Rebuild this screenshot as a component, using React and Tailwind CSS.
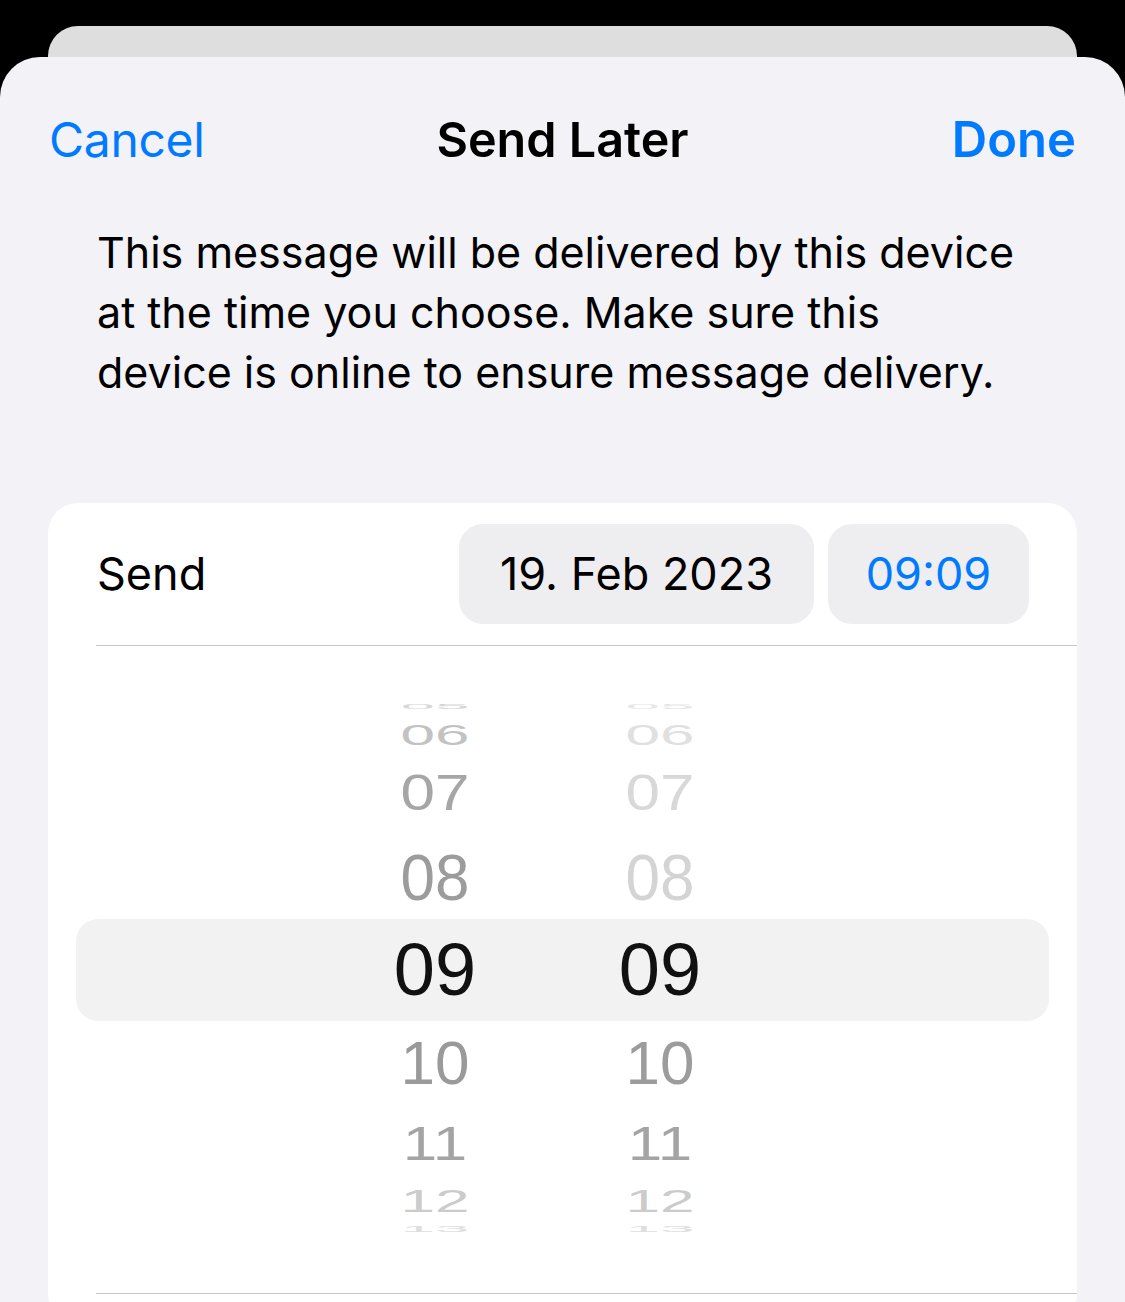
import React from 'react'

const ui = { fontFamily: 'Inter, "Liberation Sans", sans-serif' }
const digits = { fontFamily: '"Liberation Sans", Arial, sans-serif' }

// rows above the selection band
const topRows = [
    { v: '05', h: 'h-[30px]', size: 'text-[62px]', sy: 'scale-y-[0.12]', hc: 'text-[#d6d6d6]', mc: 'text-[#e6e6e6]' },
    { v: '06', h: 'h-[28px]', size: 'text-[62px]', sy: 'scale-y-[0.48]', hc: 'text-[#c2c2c2]', mc: 'text-[#e0e0e0]' },
    { v: '07', h: 'h-[88px]', size: 'text-[62px]', sy: 'scale-y-[0.8]', hc: 'text-[#a6a6a6]', mc: 'text-[#d8d8d8]' },
    { v: '08', h: 'h-[82px]', size: 'text-[62px]', sy: 'scale-y-[1.03]', hc: 'text-[#9c9c9c]', mc: 'text-[#d4d4d4]' },
]

// rows below the selection band
const bottomRows = [
    { v: '10', h: 'h-[84px]', size: 'text-[62px]', sy: 'scale-y-[1]', hc: 'text-[#9a9a9a]', mc: 'text-[#9c9c9c]' },
    { v: '11', h: 'h-[78px]', size: 'text-[62px]', sy: 'scale-y-[0.77]', hc: 'text-[#a4a4a4]', mc: 'text-[#a4a4a4]' },
    { v: '12', h: 'h-[36px]', size: 'text-[62px]', sy: 'scale-y-[0.5]', hc: 'text-[#cbcbcb]', mc: 'text-[#cbcbcb]' },
    { v: '13', h: 'h-[20px]', size: 'text-[62px]', sy: 'scale-y-[0.15]', hc: 'text-[#dedede]', mc: 'text-[#dedede]' },
]

const PickerRow = ({ row }) => (
    <div className={`flex items-center pl-[279px] gap-[65px] ${row.h}`}>
        <div className="w-[160px] flex justify-center">
            <span className={`inline-block leading-none ${row.size} ${row.sy} ${row.hc}`}>{row.v}</span>
        </div>
        <div className="w-[160px] flex justify-center">
            <span className={`inline-block leading-none ${row.size} ${row.sy} ${row.mc}`}>{row.v}</span>
        </div>
    </div>
)

const App = () => {
    return (
        <div className="h-[1302px] overflow-hidden bg-black pt-[26px]" style={ui}>
            {/* sheet behind */}
            <div className="mx-[48px] h-[31px] rounded-t-[30px] bg-[#dedede]" />

            {/* Sheet */}
            <div className="h-[1245px] rounded-t-[40px] bg-[#f2f2f7]">
                {/* Nav bar */}
                <div className="grid grid-cols-[1fr_auto_1fr] items-center px-[49px] pt-[53px] h-[113px] leading-[60px]">
                    <span className="text-[48px] text-[#007aff] tracking-[-0.3px]">Cancel</span>
                    <span className="text-[48.5px] font-semibold text-black">Send Later</span>
                    <span className="text-[49px] font-semibold text-[#007aff] text-right">Done</span>
                </div>

                {/* Description */}
                <p className="mt-[52px] px-[97px] text-[43px] leading-[60px] text-black whitespace-nowrap">
                    This message will be delivered by this device<br />
                    at the time you choose. Make sure this<br />
                    device is online to ensure message delivery.
                </p>

                {/* Card */}
                <div className="mt-[101px] mx-[48px] h-[820px] rounded-[30px] bg-white">
                    <div className="flex items-center pl-[49px] pr-[48px] pt-[21px] pb-[21px]">
                        <span className="flex-1 text-[45px] text-black">Send</span>
                        <div className="flex gap-[14px]">
                            <div className="w-[355px] h-[100px] rounded-[24px] bg-[#eeeef0] flex items-center justify-center text-[45px] text-black">
                                19. Feb 2023
                            </div>
                            <div className="w-[201px] h-[100px] rounded-[24px] bg-[#eeeef0] flex items-center justify-center text-[45px] text-[#007aff]">
                                09:09
                            </div>
                        </div>
                    </div>
                    <div className="ml-[48px] h-px bg-[#c6c6c8]" />

                    {/* Wheel picker */}
                    <div className="pt-[45px] px-[28px]" style={digits}>
                        {topRows.map((row) => <PickerRow key={row.v} row={row} />)}

                        <div className="flex items-center pl-[279px] gap-[65px] h-[102px] rounded-[22px] bg-[#f2f2f3]">
                            <div className="w-[160px] flex justify-center">
                                <span className="inline-block leading-none text-[74px] text-[#111]">09</span>
                            </div>
                            <div className="w-[160px] flex justify-center">
                                <span className="inline-block leading-none text-[74px] text-[#111]">09</span>
                            </div>
                        </div>

                        {bottomRows.map((row) => <PickerRow key={row.v} row={row} />)}
                    </div>

                    <div className="mt-[54px] ml-[48px] h-px bg-[#c6c6c8]" />
                </div>
            </div>
        </div>
    )
}

export default App
